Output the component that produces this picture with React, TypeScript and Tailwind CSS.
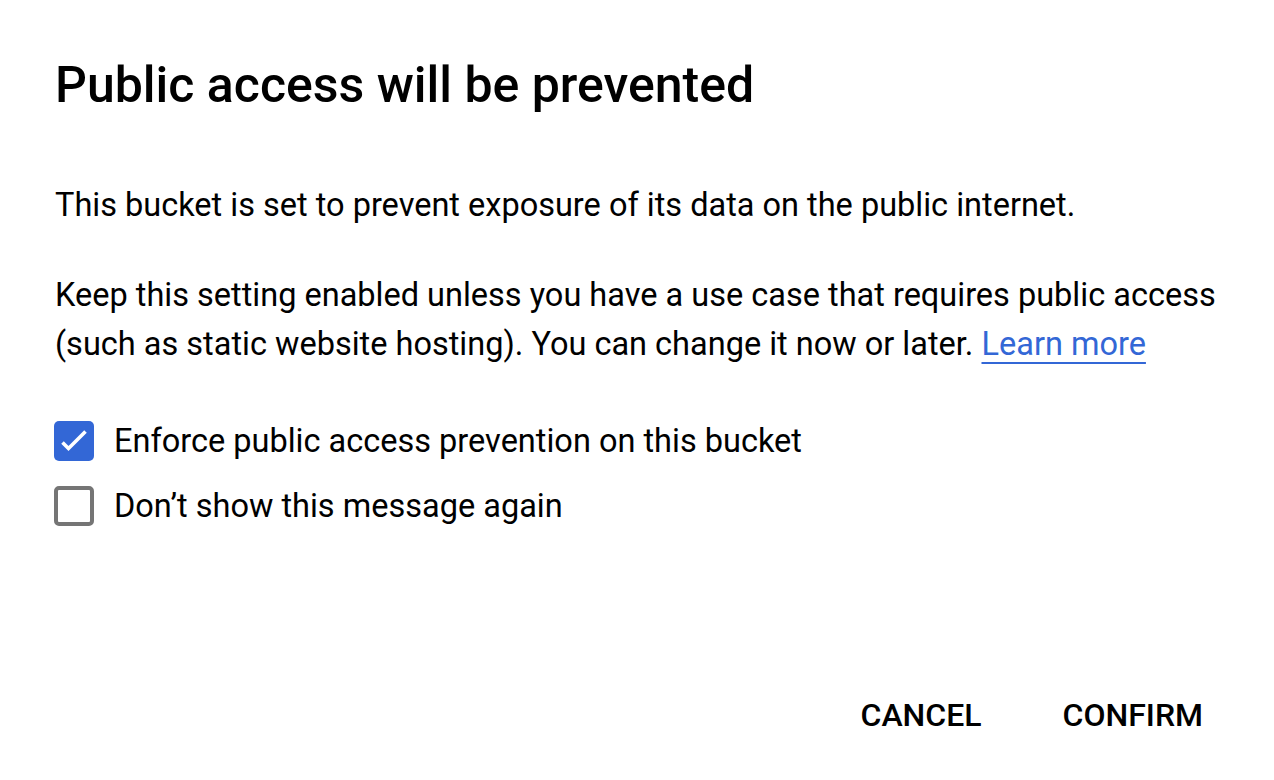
import React, { useState } from "react";

function Checkbox({ checked, onChange }: { checked: boolean; onChange: () => void }) {
  return (
    <button
      type="button"
      onClick={onChange}
      className={
        checked
          ? "w-[40px] h-[40px] rounded-[5px] bg-[#3367d6] shrink-0"
          : "w-[40px] h-[40px] rounded-[5px] border-[4px] border-[#757575] bg-white shrink-0"
      }
    >
      {checked && (
        <svg width="40" height="40" viewBox="0 0 40 40" fill="none">
          <path d="M8.5 21.5l6 6L31.5 10.5" stroke="white" strokeWidth="3.6" />
        </svg>
      )}
    </button>
  );
}

export default function App() {
  const [enforce, setEnforce] = useState(true);
  const [hide, setHide] = useState(false);

  return (
    <div className="w-[1274px] h-[780px] bg-white font-['Roboto',sans-serif] text-black pl-[55px] flex flex-col">
      <h1 className="mt-[53px] text-[50px] font-medium leading-[64px]">
        Public access will be prevented
      </h1>

      <p className="mt-[64px] text-[32.5px] leading-[48px]">
        This bucket is set to prevent exposure of its data on the public internet.
      </p>
      <p className="mt-[42px] w-[1200px] text-[32.5px] leading-[49px]">
        Keep this setting enabled unless you have a use case that requires public access
        (such as static website hosting). You can change it now or later.{" "}
        <a href="#" className="text-[#3367d6] underline underline-offset-[7px] decoration-[2px]">
          Learn more
        </a>
      </p>

      {/* checkboxes */}
      <div className="mt-[52px] -ml-px flex flex-col gap-[25px]">
        <label className="flex items-center gap-[20px] text-[32.5px] leading-[40px]">
          <Checkbox checked={enforce} onChange={() => setEnforce(!enforce)} />
          Enforce public access prevention on this bucket
        </label>
        <label className="flex items-center gap-[20px] text-[32.5px] leading-[40px]">
          <Checkbox checked={hide} onChange={() => setHide(!hide)} />
          Don’t show this message again
        </label>
      </div>

      <div className="mt-auto mb-[46px] flex justify-end gap-[81px] pr-[71px]">
        <button className="text-[32px] font-medium leading-[38px]">CANCEL</button>
        <button className="text-[32px] font-medium leading-[38px]">CONFIRM</button>
      </div>
    </div>
  );
}
